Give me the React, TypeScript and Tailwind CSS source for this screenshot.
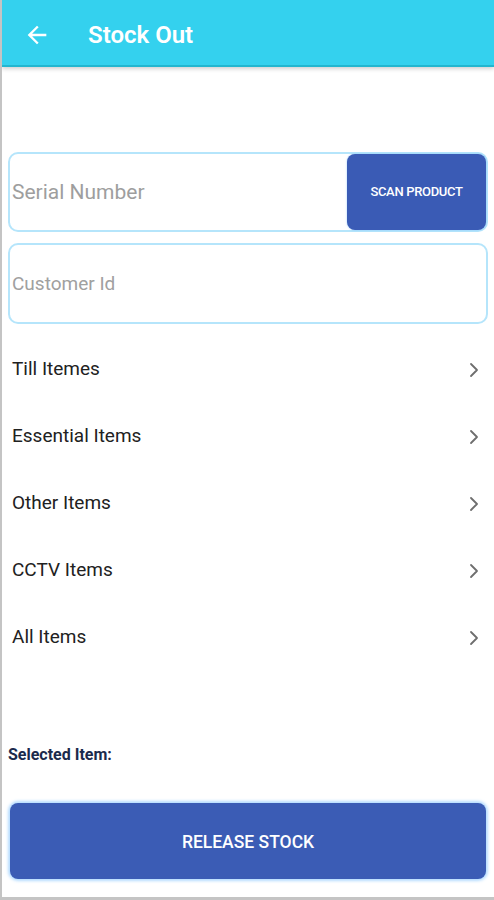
import { ChevronRight } from "lucide-react";

const items = ["Till Itemes", "Essential Items", "Other Items", "CCTV Items", "All Items"];

const App = () => {
  return (
    <div
      className="h-[900px] w-full bg-white border-l-2 border-b-[3px] border-[#c4c4c4] flex flex-col overflow-hidden"
      style={{ fontFamily: "Roboto, 'Noto Sans', sans-serif" }}
    >
      {/* Toolbar */}
      <header className="h-[67px] shrink-0 bg-[#34d1ee] border-b-2 border-[#22b6cf] shadow-[0_2px_4px_rgba(0,0,0,0.18)] flex items-center pt-[4px]">
        <button className="ml-[21px] w-[28px] h-[28px] flex items-center justify-center text-white">
          <svg width="28" height="28" viewBox="0 0 24 24" fill="currentColor">
            <path d="M20 11H7.83l5.59-5.59L12 4l-8 8 8 8 1.41-1.41L7.83 13H20v-2z" />
          </svg>
        </button>
        <h1 className="ml-[37px] text-[24px] font-semibold text-white">Stock Out</h1>
      </header>

      {/* Inputs */}
      <div className="mt-[85px] px-[6px] flex flex-col gap-[11px]">
        <div className="h-[80px] rounded-[10px] border-2 border-[#b5e5fb] flex items-center pl-[2px] pr-0">
          <span className="flex-1 text-[21px] text-[#9e9e9e] pt-[2px]">Serial Number</span>
          <button className="h-[76px] w-[139px] rounded-[8px] bg-[#3a5bb5] text-white text-[13px] font-medium tracking-tight shadow-[0_0_2px_rgba(120,190,255,0.8)]">
            SCAN PRODUCT
          </button>
        </div>
        <div className="h-[81px] rounded-[10px] border-2 border-[#b5e5fb] flex items-center pl-[2px] pt-[2px]">
          <span className="text-[19px] text-[#a0a0a0]">Customer Id</span>
        </div>
      </div>

      {/* Categories */}
      <ul className="mt-[12px] flex flex-col">
        {items.map((item) => (
          <li key={item} className="h-[67px] flex items-center justify-between pl-[10px] pr-[8px]">
            <span className="text-[19px] text-[#212121]">{item}</span>
            <ChevronRight size={24} strokeWidth={1.8} className="text-[#6e6e6e]" />
          </li>
        ))}
      </ul>

      <p className="mt-[72px] ml-[6px] text-[16px] font-bold text-[#1b2a4c]">Selected Item:</p>

      <div className="mt-[36px] px-[8px]">
        <button className="w-full h-[76px] rounded-[8px] bg-[#3b5cb5] text-white text-[17.5px] font-medium pt-[3px] shadow-[0_0_3px_2px_rgba(150,205,255,0.7)]">
          RELEASE STOCK
        </button>
      </div>
    </div>
  );
};

export default App;
